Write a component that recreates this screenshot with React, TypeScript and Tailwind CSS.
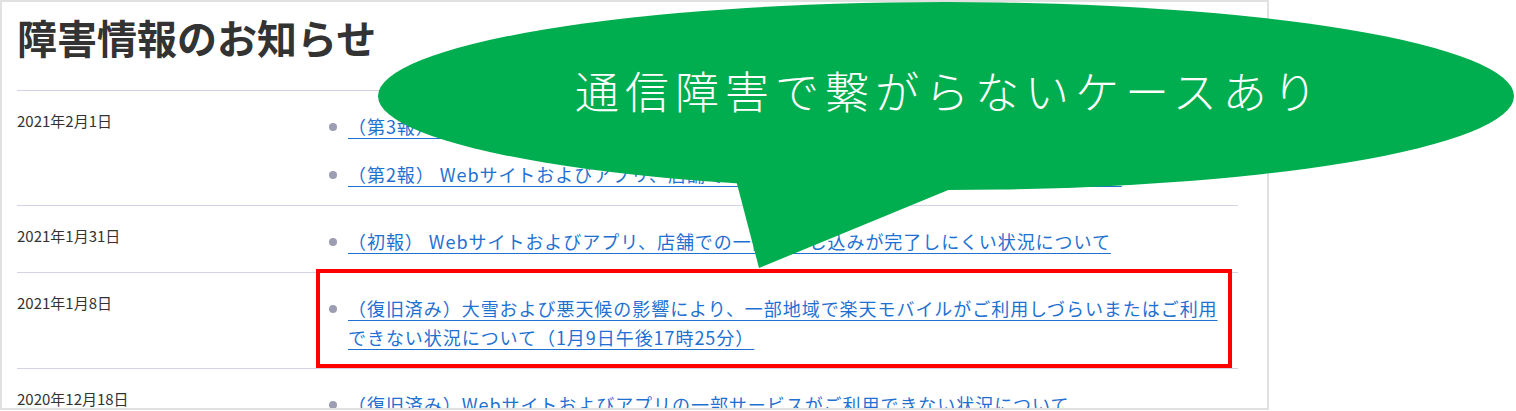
const rows = [
  {
    date: "2021年2月1日",
    items: [
      "（第3報）Webサイトおよびアプリ、店舗での一部お申し込みが完了しにくい状況について",
      "（第2報） Webサイトおよびアプリ、店舗での一部お申し込みが完了しにくい状況について",
    ],
  },
  {
    date: "2021年1月31日",
    items: ["（初報） Webサイトおよびアプリ、店舗での一部お申し込みが完了しにくい状況について"],
  },
  {
    date: "2021年1月8日",
    items: [
      "（復旧済み）大雪および悪天候の影響により、一部地域で楽天モバイルがご利用しづらいまたはご利用できない状況について（1月9日午後17時25分）",
    ],
  },
  {
    date: "2020年12月18日",
    items: ["（復旧済み）Webサイトおよびアプリの一部サービスがご利用できない状況について"],
  },
];

function Row({ date, items }: { date: string; items: string[] }) {
  return (
    <div className="flex border-t border-[#d3d3e3] pt-[21px] pb-[16px]">
      <div className="w-[312px] shrink-0 text-[15px] leading-[18px] text-[#333]">{date}</div>
      <ul className="flex flex-col gap-[19px] w-[895px]">
        {items.map((t) => (
          <li key={t} className="flex items-start">
            <span className="mt-[10.5px] mr-[11px] h-[8px] w-[8px] shrink-0 rounded-full bg-[#9d9db3]" />
            <a className="text-[18px] leading-[29px] tracking-[0.95px] text-[#1f71d1] underline underline-offset-[4px] decoration-1">
              {t}
            </a>
          </li>
        ))}
      </ul>
    </div>
  );
}

export default function App() {
  return (
    <div className="relative h-[411px] w-[1516px] overflow-hidden bg-white font-['Noto_Sans_CJK_JP','Noto_Sans',sans-serif]">
      <div className="h-[410px] w-[1269px] overflow-hidden border-2 border-[#e1e1e1] pl-[15px]">
        <div className="w-[1221px]">
          <h1 className="h-[88px] pt-[9px] text-[40px] font-bold leading-[52px] text-[#333]">障害情報のお知らせ</h1>
          {rows.map((r) => (
            <Row key={r.date} {...r} />
          ))}
        </div>
      </div>

      {/* highlight box */}
      <div className="absolute left-[316px] top-[269px] h-[99px] w-[916px] border-4 border-[#ff0000]" />

      {/* callout */}
      <svg className="absolute left-0 top-0" width="1516" height="411">
        <ellipse cx="946" cy="96" rx="568" ry="94" fill="#00ae4f" />
        <polygon points="736,180 759,268 958,186" fill="#00ae4f" />
      </svg>
      <div className="absolute left-[575px] top-[62px] whitespace-nowrap text-[44px] font-light leading-[56px] tracking-[6px] text-white">
        通信障害で繋がらないケースあり
      </div>
    </div>
  );
}
